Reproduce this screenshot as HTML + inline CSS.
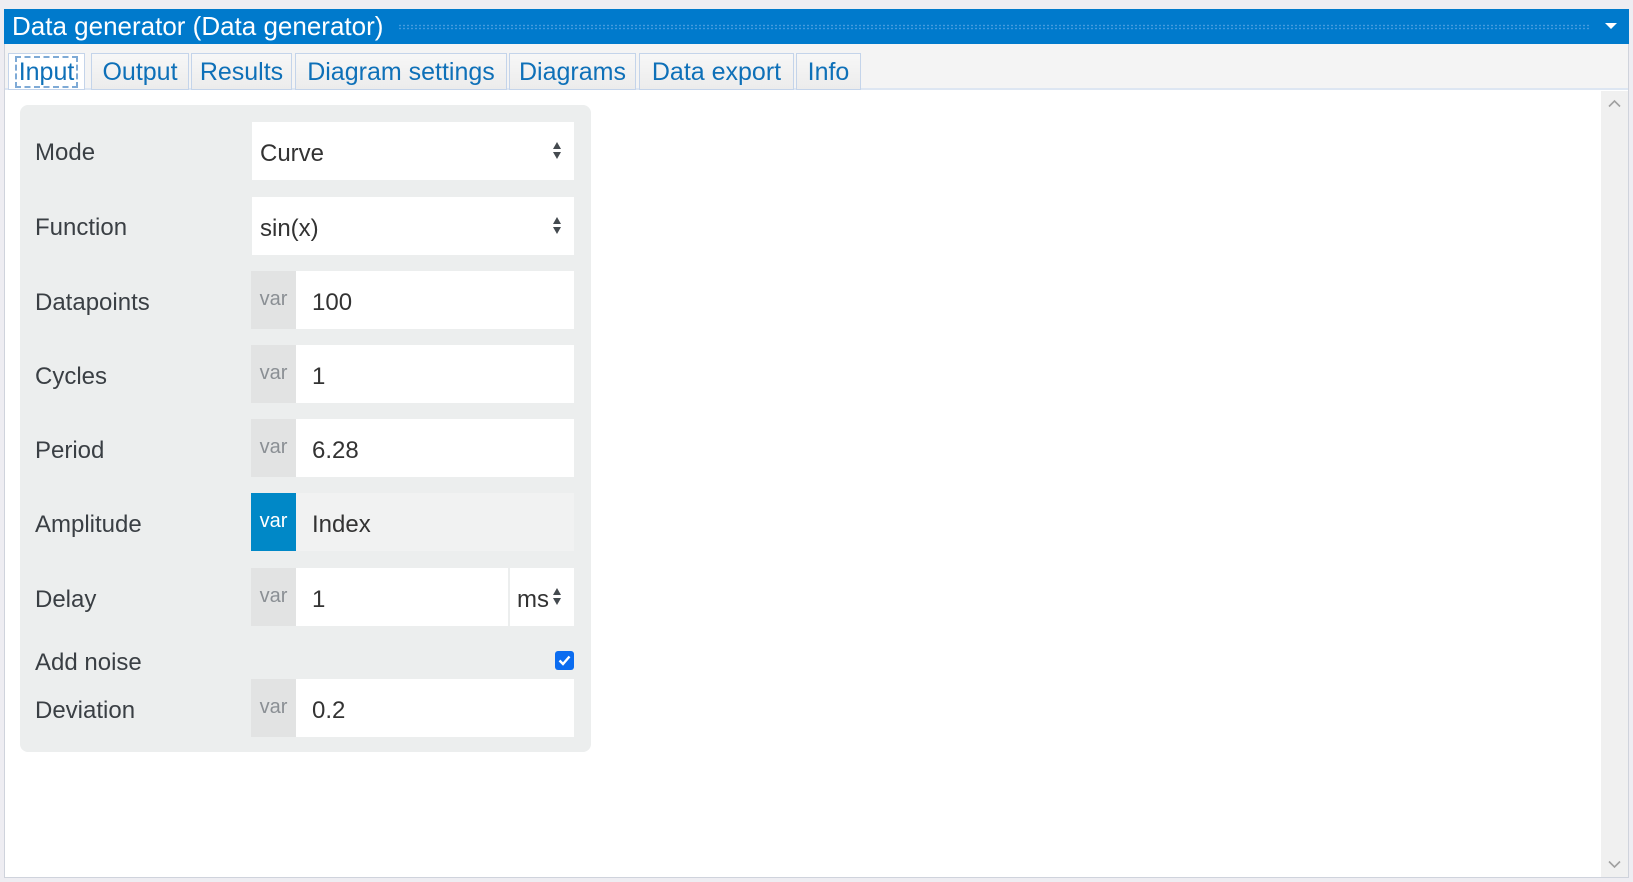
<!DOCTYPE html>
<html><head><meta charset="utf-8"><style>
*{box-sizing:border-box;margin:0;padding:0}
body{width:1633px;height:882px;background:#eeedf2;font-family:"Liberation Sans",sans-serif;position:relative;overflow:hidden;color:#3c4043}
.frame{position:absolute;left:4px;top:9px;width:1625px;height:869px;border:1px solid #cfd3dc;background:#fff}
.title{position:absolute;left:4px;top:9px;width:1625px;height:35px;background:#007acc;color:#fff;font-size:26px;line-height:35px;padding-left:8px}
.dots{position:absolute;left:394px;right:40px;top:15px;height:6px;background-image:radial-gradient(#4d9fe0 35%,transparent 40%);background-size:4px 3px;opacity:.9}
.tri{position:absolute;right:12px;top:14px;width:0;height:0;border-left:6px solid transparent;border-right:6px solid transparent;border-top:6px solid #fff}
.tabbar{position:absolute;left:5px;top:44px;width:1623px;height:46px;background:#f4f4f4;border-bottom:2px solid #dde6f2}
.tab{position:absolute;top:9px;height:37px;border:1px solid #c4d4ea;background:linear-gradient(#f7f7f7,#ececec);color:#0e70b8;font-size:25px;line-height:37px;text-align:center;white-space:nowrap}
.tab.act{background:#fff;border-color:#c4d4ea}
.tab.act span{outline:2px dashed #7eaad6;outline-offset:0;padding:0 2px}
.scroll{position:absolute;left:1601px;top:91px;width:27px;height:786px;background:#f0f0f0}
.scroll svg{position:absolute;left:7px}
.panel{position:absolute;left:20px;top:105px;width:571px;height:647px;background:#eceeee;border-radius:8px}
.lbl{position:absolute;left:35px;font-size:24px;color:#3a3f44}
.box{position:absolute;left:251px;width:323px;height:58px;background:#fff;font-size:24px;line-height:64px;color:#333}
.var{position:absolute;left:0;top:0;width:45px;height:100%;background:#e2e3e3;color:#8a8f94;font-size:20px;line-height:56px;text-align:center}
.val{position:absolute;left:61px;top:0}
.arr{position:absolute;right:12px;top:20px}
</style></head><body>
<div class="frame"></div>
<div class="title">Data generator (Data generator)<div class="dots"></div><div class="tri"></div></div>
<div class="tabbar">
<div class="tab act" style="left:3px;width:77px"><span>Input</span></div>
<div class="tab" style="left:86px;width:98px">Output</div>
<div class="tab" style="left:186px;width:101px">Results</div>
<div class="tab" style="left:290px;width:212px">Diagram settings</div>
<div class="tab" style="left:504px;width:127px">Diagrams</div>
<div class="tab" style="left:634px;width:155px">Data export</div>
<div class="tab" style="left:791px;width:65px">Info</div>
</div>
<div class="scroll">
<svg style="top:8px" width="13" height="9" viewBox="0 0 13 9"><path d="M1 7.5L6.5 2L12 7.5" stroke="#a0a0a0" stroke-width="1.6" fill="none"/></svg>
<svg style="bottom:8px" width="13" height="9" viewBox="0 0 13 9"><path d="M1 1.5L6.5 7L12 1.5" stroke="#a0a0a0" stroke-width="1.6" fill="none"/></svg>
</div>
<div class="panel"></div>

<div class="lbl" style="top:139px">Mode</div>
<div class="box" style="top:122px;left:252px;width:322px"><span style="position:absolute;left:8px">Curve</span>
<svg class="arr" width="10" height="17" viewBox="0 0 10 17"><path d="M5 0L9 7H1Z M1 10H9L5 17Z" fill="#444a4f"/></svg></div>

<div class="lbl" style="top:214px">Function</div>
<div class="box" style="top:197px;left:252px;width:322px"><span style="position:absolute;left:8px">sin(x)</span>
<svg class="arr" width="10" height="17" viewBox="0 0 10 17"><path d="M5 0L9 7H1Z M1 10H9L5 17Z" fill="#444a4f"/></svg></div>

<div class="lbl" style="top:289px">Datapoints</div>
<div class="box" style="top:271px"><div class="var">var</div><span class="val">100</span></div>

<div class="lbl" style="top:363px">Cycles</div>
<div class="box" style="top:345px"><div class="var">var</div><span class="val">1</span></div>

<div class="lbl" style="top:437px">Period</div>
<div class="box" style="top:419px"><div class="var">var</div><span class="val">6.28</span></div>

<div class="lbl" style="top:511px">Amplitude</div>
<div class="box" style="top:493px;background:#f1f2f2"><div class="var" style="background:#0088c7;color:#fff">var</div><span class="val">Index</span></div>

<div class="lbl" style="top:586px">Delay</div>
<div class="box" style="top:568px"><div class="var">var</div><span class="val">1</span>
<div style="position:absolute;left:257px;top:0;width:2px;height:58px;background:#eceeee"></div>
<span style="position:absolute;left:266px">ms</span>
<svg style="position:absolute;right:12px;top:20px" width="10" height="17" viewBox="0 0 10 17"><path d="M5 0L9 7H1Z M1 10H9L5 17Z" fill="#444a4f"/></svg></div>

<div class="lbl" style="top:649px">Add noise</div>
<svg style="position:absolute;left:555px;top:651px" width="19" height="19" viewBox="0 0 19 19"><rect x="0" y="0" width="19" height="19" rx="3" fill="#0b6cf0"/><path d="M4.5 9.5L8 13L14.5 5.5" stroke="#fff" stroke-width="2.4" fill="none"/></svg>

<div class="lbl" style="top:697px">Deviation</div>
<div class="box" style="top:679px"><div class="var">var</div><span class="val">0.2</span></div>
</body></html>
